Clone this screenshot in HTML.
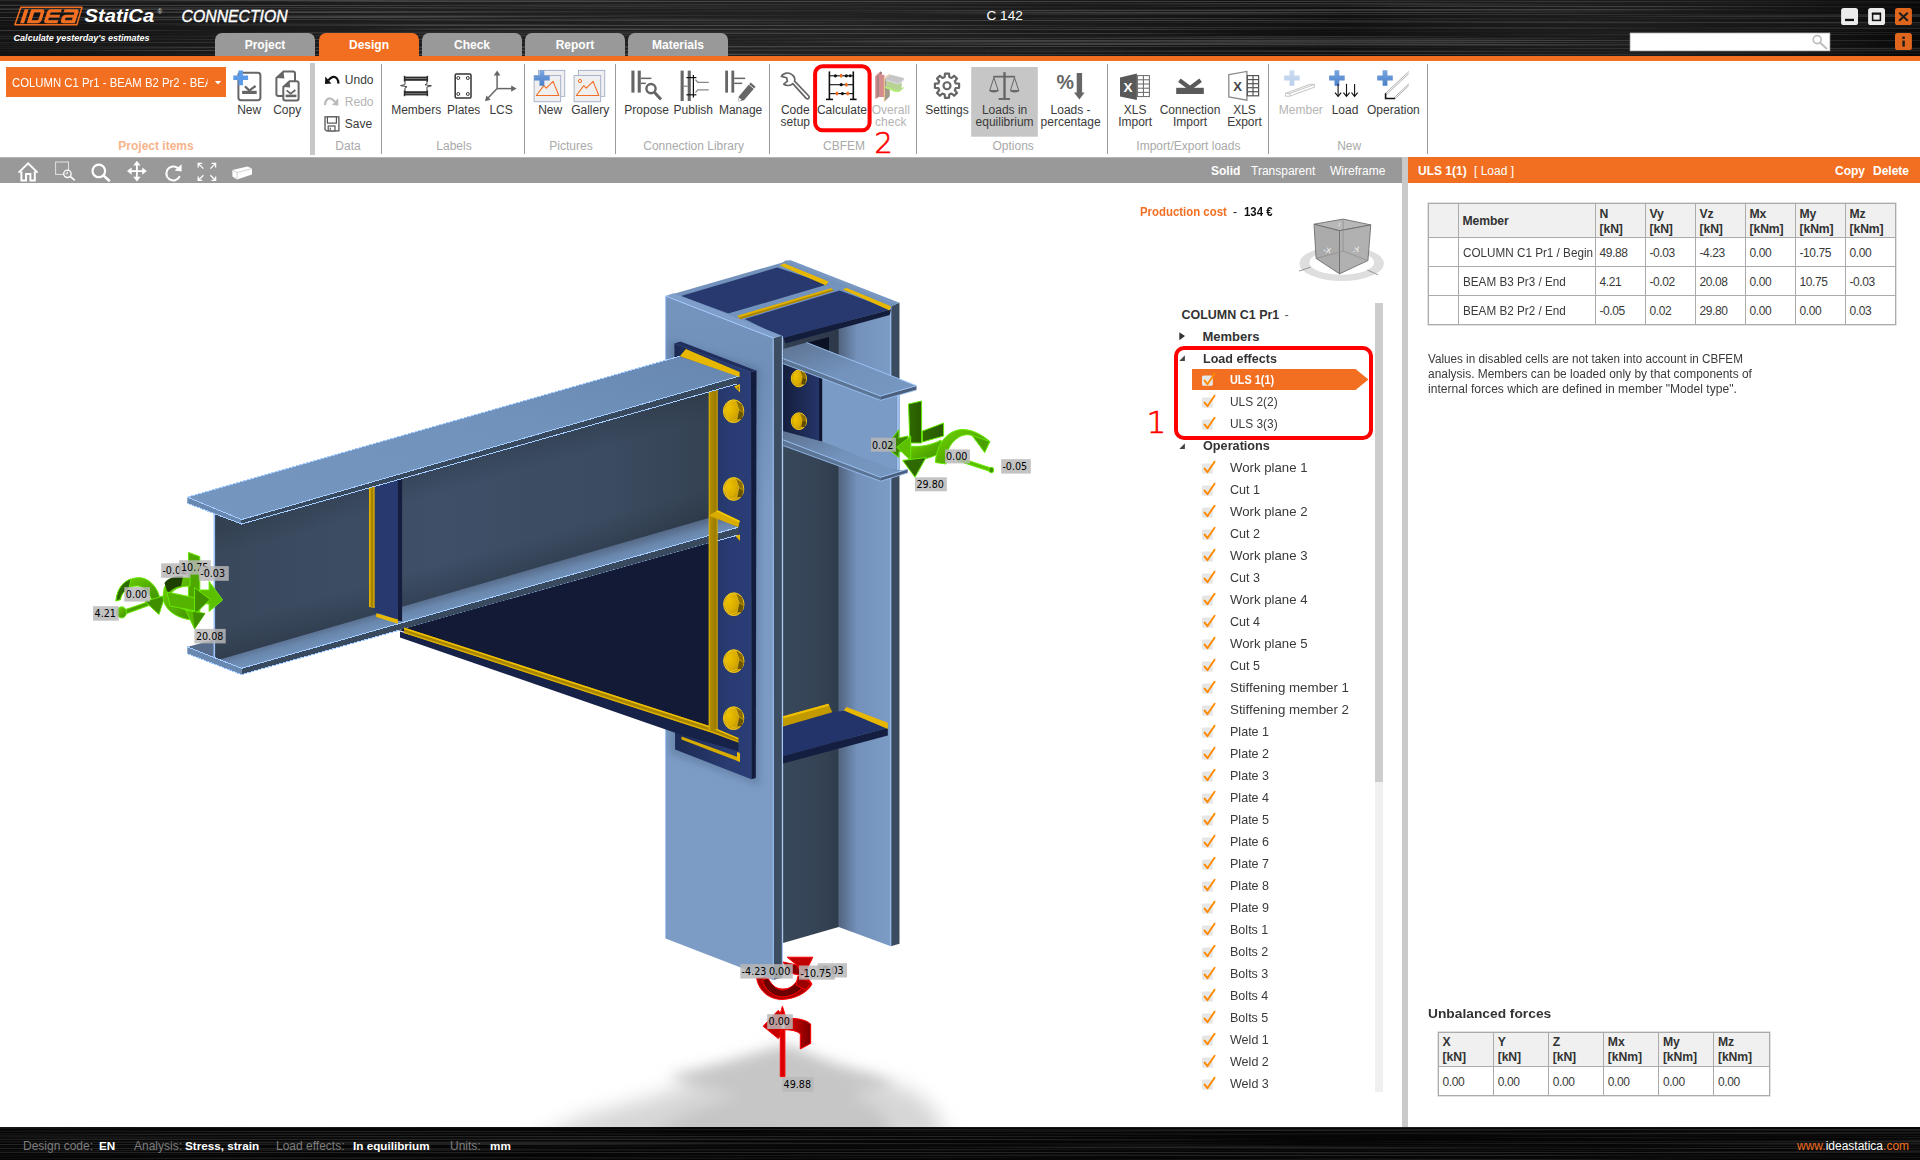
<!DOCTYPE html>
<html lang="en">
<head>
<meta charset="utf-8">
<title>IDEA StatiCa Connection - C 142</title>
<style>
*{box-sizing:border-box;margin:0;padding:0}
html,body{width:1920px;height:1160px;overflow:hidden;background:#fff}
body{font-family:"Liberation Sans",sans-serif;font-size:12px;color:#333;position:relative}
.abs{position:absolute}
#app{position:absolute;left:0;top:0;width:1920px;height:1160px;overflow:hidden;background:#fff}
/* ---------- brushed dark bars ---------- */
.brushed{position:absolute;left:0;width:1920px;background:#1b1b1b;overflow:hidden}
.brushed svg{position:absolute;left:0;top:0}
#titlebar{top:0;height:56px}
#status{top:1127px;height:33px}
#orangeline{position:absolute;left:0;top:56px;width:1920px;height:5px;background:#f26f21}
/* ---------- tabs ---------- */
.tab{position:absolute;top:33px;height:23px;width:100px;background:#999;border-radius:7px 7px 0 0;color:#fff;font-weight:bold;font-size:12px;text-align:center;line-height:24px}
.tab.on{background:#f26f21}
/* ---------- ribbon ---------- */
#ribbon{position:absolute;left:0;top:61px;width:1920px;height:96px;background:#fff}
.rl{position:absolute;margin-top:.7px;font-size:12px;line-height:13px;color:#3a3a3a;text-align:center;white-space:nowrap;transform:translateX(-50%)}
.rl.dis{color:#b4b4b4}
.gl{position:absolute;top:78px;font-size:12px;line-height:14px;color:#a9a9a9;white-space:nowrap;transform:translateX(-50%)}
.sep{position:absolute;top:3px;width:1px;height:90px;background:#9a9a9a}
.ic{position:absolute}
/* ---------- viewport toolbar ---------- */
#vtb{position:absolute;left:0;top:157px;width:1402px;height:26px;background:#999;border-top:1px solid #b5b5b5}
#vtb .m{position:absolute;top:6px;color:#fff;font-size:12px;line-height:14px;white-space:nowrap}
#splitter{position:absolute;left:1402px;top:157px;width:6px;height:970px;background:#c9c9c9}
#phead{position:absolute;left:1408px;top:157px;width:512px;height:26px;background:#f26f21;color:#fff;font-size:12px;line-height:14px}
#phead span{position:absolute;top:7px;white-space:nowrap}
/* ---------- tree ---------- */
.tr{position:absolute;font-size:13px;line-height:16px;color:#333;white-space:nowrap}
.tr.b{font-weight:bold;color:#333}
/* ---------- tables ---------- */
table.g{position:absolute;border-collapse:collapse;font-size:12px;color:#3a3a3a;table-layout:fixed;border:1px solid #a6a6a6;box-shadow:0 0 0 .6px #cfcfcf}
table.g td,table.g th{border:1px solid #ababab;padding:0 0 0 4px;text-align:left;vertical-align:middle;white-space:nowrap;overflow:hidden;background:#fff;font-weight:normal}
table.g th{background:#f0f0f0;font-weight:bold;line-height:15px;color:#333;font-size:12.2px;letter-spacing:-.1px}
table.g td{letter-spacing:-.4px;padding-top:1.5px}
table.g th{padding-top:2px}
table.g td.h{background:#f0f0f0}
table.g .sq{display:inline-block;transform:scaleX(.975);transform-origin:0 50%;letter-spacing:0}
/* ---------- status ---------- */
#status span{position:absolute;top:12px;font-size:12px;line-height:14px;white-space:nowrap}
#status .k{color:#7d7d7d}
#status .v{color:#fff;font-weight:bold;font-size:11.7px}
</style>
</head>
<body>
<div id="app">

<!-- ================= TITLE BAR ================= -->
<div id="titlebar" class="brushed">
<svg width="1920" height="56"><defs>
<filter id="br" x="0" y="0" width="100%" height="100%" color-interpolation-filters="sRGB"><feTurbulence type="fractalNoise" baseFrequency="0.0012 0.75" numOctaves="3" seed="11"/><feColorMatrix type="matrix" values="0 0 0 0 .21  0 0 0 0 .21  0 0 0 0 .21  4.2 0 0 0 -2.0"/></filter>
<filter id="br2" x="0" y="0" width="100%" height="100%" color-interpolation-filters="sRGB"><feTurbulence type="fractalNoise" baseFrequency="0.0012 0.75" numOctaves="3" seed="5"/><feColorMatrix type="matrix" values="0 0 0 0 .14  0 0 0 0 .14  0 0 0 0 .14  4.2 0 0 0 -1.9"/></filter>
<linearGradient id="brg" x1="0" x2="1" y1="0" y2="0"><stop offset="0" stop-color="#fff" stop-opacity=".03"/><stop offset=".2" stop-color="#fff" stop-opacity=".08"/><stop offset=".45" stop-color="#fff" stop-opacity=".09"/><stop offset=".7" stop-color="#fff" stop-opacity=".02"/><stop offset="1" stop-color="#000" stop-opacity=".25"/></linearGradient>
</defs>
<rect width="1920" height="56" fill="#0b0b0b"/>
<rect width="1920" height="56" fill="#4c4c4c" filter="url(#br)"/>
<rect width="1920" height="56" fill="url(#brg)"/>
</svg>
</div>
<div id="orangeline"></div>
<!-- title bar content (page coords) -->
<svg class="abs" style="left:0;top:0" width="1920" height="56" viewBox="0 0 1920 56">
<!-- IDEA logo box -->
<polygon points="14.9,24.8 20.9,7.2 82,7.2 76.9,24.8" fill="none" stroke="#f26f21" stroke-width="1.5" stroke-linejoin="round"/>
<g fill="#f26f21" transform="skewX(-18) translate(27.6,16.2) scale(1.11,1.06) translate(-27.4,-16.2)">
<!-- I -->
<rect x="27.4" y="9.6" width="3.6" height="13.2"/>
<!-- D -->
<path d="M33.4,9.6 h9.4 q3.2,0 3.2,3.2 v6.8 q0,3.2 -3.2,3.2 h-9.4 z M37,12.4 v7.6 h5 q.9,0 .9,-.9 v-5.8 q0,-.9 -.9,-.9 z" fill-rule="evenodd"/>
<!-- E -->
<path d="M48.4,12.6 q0,-3 3,-3 h9.6 v2.8 h-8.4 q-.8,0 -.8,.8 v1.6 h9.2 v2.6 h-9.2 v1.8 q0,.8 .8,.8 h8.4 v2.8 h-9.6 q-3,0 -3,-3 z"/>
<!-- A (lowercase style a) -->
<path d="M63.4,9.6 h10.4 q3,0 3,3 v10.2 h-10.4 q-3,0 -3,-3 v-2 q0,-3 3,-3 h6.8 v-1.6 q0,-.8 -.8,-.8 h-9 z M67.6,17.4 q-.8,0 -.8,.8 v1 q0,.8 .8,.8 h5.6 v-2.6 z" fill-rule="evenodd"/>
</g>
<text x="84.6" y="22.2" font-family="'Liberation Sans',sans-serif" font-weight="bold" font-style="italic" font-size="18.2" fill="#fff" textLength="69.6" lengthAdjust="spacingAndGlyphs">StatiCa</text>
<text x="157.4" y="14.4" font-family="'Liberation Sans',sans-serif" font-size="6.5" fill="#ddd">®</text>
<text x="181.6" y="21.7" font-family="'Liberation Sans',sans-serif" font-style="italic" font-size="15.6" fill="#fff" textLength="106" lengthAdjust="spacingAndGlyphs" stroke="#fff" stroke-width=".35">CONNECTION</text>
<text x="13.6" y="41.2" font-family="'Liberation Sans',sans-serif" font-style="italic" font-weight="bold" font-size="9.6" fill="#fff" textLength="136" lengthAdjust="spacingAndGlyphs">Calculate yesterday's estimates</text>
<!-- window buttons -->
<rect x="1841.1" y="8.1" width="16.9" height="16.9" rx="2.6" fill="#ececec"/>
<rect x="1845" y="18.8" width="9" height="2.3" fill="#111"/>
<rect x="1868.1" y="8.1" width="16.9" height="16.9" rx="2.6" fill="#ececec"/>
<rect x="1872.6" y="13.6" width="7.8" height="6.8" fill="none" stroke="#111" stroke-width="1.5"/>
<rect x="1871.9" y="12.6" width="9.2" height="2" fill="#111"/>
<rect x="1895" y="8.1" width="16.9" height="16.9" rx="2.6" fill="#e0651d"/>
<path d="M1899.2,12.8 L1907.8,20.8 M1907.8,12.8 L1899.2,20.8" stroke="#1c1c1c" stroke-width="2"/>
<rect x="1895" y="33.1" width="16.9" height="16.9" rx="2.6" fill="#e0651d"/>
<rect x="1902.4" y="36.6" width="2.4" height="2.4" fill="#1c1c1c"/>
<rect x="1902.4" y="40.6" width="2.4" height="6" fill="#1c1c1c"/>
<!-- search -->
<rect x="1630.2" y="33.1" width="199.6" height="17.7" fill="#fff" stroke="#d8d8d8" stroke-width=".8"/>
<circle cx="1817.2" cy="39.6" r="4" fill="none" stroke="#bdbdbd" stroke-width="1.7"/>
<line x1="1820.2" y1="42.8" x2="1827" y2="49" stroke="#bdbdbd" stroke-width="2"/>
</svg>


<div class="tab" style="left:215px">Project</div>
<div class="tab on" style="left:319px">Design</div>
<div class="tab" style="left:422px">Check</div>
<div class="tab" style="left:525px">Report</div>
<div class="tab" style="left:628px">Materials</div>

<div class="abs" style="left:986.5px;top:8.4px;color:#fff;font-size:13.6px;line-height:16px;white-space:nowrap">C 142</div>

<!-- ================= RIBBON ================= -->
<div id="ribbon">
<!-- ribbon origin (0,61) -->
<div class="abs" style="left:6px;top:6px;width:220px;height:30px;background:#f26f21"></div>
<div class="abs" style="left:12px;top:14.1px;font-size:13.4px;line-height:16px;color:#fff;white-space:nowrap;transform:scaleX(.847);transform-origin:0 50%;width:230.6px;overflow:hidden">COLUMN C1 Pr1 - BEAM B2 Pr2 - BEAM</div>
<svg class="abs" style="left:0;top:0" width="1920" height="96" viewBox="0 61 1920 96">
<defs>
<linearGradient id="plusB" x1="0" y1="0" x2="0" y2="1"><stop offset="0" stop-color="#7aa7e0"/><stop offset="1" stop-color="#4a7fc8"/></linearGradient>
<g id="plus"><path d="M-2.4,-7.8 h4.8 v5.4 h5.4 v4.8 h-5.4 v5.4 h-4.8 v-5.4 h-5.4 v-4.8 h5.4 z" fill="url(#plusB)"/></g>
<g id="pic"><rect x="4.4" y="-5.1" width="26.2" height="26" fill="#efefef" stroke="#aab4cc" stroke-width="1"/><rect x="0" y="0" width="26.5" height="26.2" fill="#efefef" stroke="#aab4cc" stroke-width="1"/><polygon points="2.2,20 9.7,10.2 12.2,12.7 19,5.9 24.7,20" fill="none" stroke="#f26f21" stroke-width="1.1" stroke-linejoin="round"/></g>
</defs>
<!-- dropdown arrow -->
<polygon points="214.8,81 221.2,81 218,84.6" fill="#fff"/>
<!-- New (project item) -->
<rect x="238.4" y="72.8" width="22" height="27.4" rx="2.6" fill="#fff" stroke="#666" stroke-width="2"/>
<polyline points="245,86.4 249.3,90.6 255.6,86" fill="none" stroke="#666" stroke-width="2.2"/>
<rect x="242.1" y="90.8" width="14.6" height="3.2" fill="#666"/>
<path d="M238.4,70.4 h4.6 v5.1 h5.1 v4.6 h-5.1 v5.1 h-4.6 v-5.1 h-5.1 v-4.6 h5.1 z" fill="#5b9be8"/>
<!-- Copy -->
<path d="M276.4,78 L283.5,71.6 H293 a2,2 0 0 1 2,2 V94 a2,2 0 0 1 -2,2 H278.4 a2,2 0 0 1 -2,-2 Z" fill="#fff" stroke="#666" stroke-width="2"/>
<polygon points="276.4,78 283.5,71.6 284.4,78.6" fill="#666"/>
<path d="M283.3,87 L289.6,81.2 H296.6 a2,2 0 0 1 2,2 V98.4 a2,2 0 0 1 -2,2 H285.3 a2,2 0 0 1 -2,-2 Z" fill="#fff" stroke="#666" stroke-width="2"/>
<polygon points="283.3,87 289.6,81.2 290.2,87.4" fill="#666"/>
<polyline points="286.6,90.4 290.6,93.6 295.4,90" fill="none" stroke="#666" stroke-width="1.8"/>
<rect x="285.6" y="94.6" width="10.8" height="2.6" fill="#666"/>
<!-- thick separator -->
<rect x="310" y="63" width="5" height="92" fill="#c8c8c8"/>
<!-- Undo -->
<path d="M328.4,80.2 Q333.2,74.4 337,78.6 Q338.6,80.6 338.3,83.6" fill="none" stroke="#111" stroke-width="2.2"/>
<polygon points="325.3,76.6 325,83.9 331.4,83.4" fill="#111"/>
<!-- Redo -->
<path d="M335,101.8 Q330.2,96 326.4,100.2 Q324.8,102.2 325.1,105.2" fill="none" stroke="#b9b9b9" stroke-width="2.2"/>
<polygon points="338.1,98.2 338.4,105.5 332,105" fill="#b9b9b9"/>
<!-- Save -->
<path d="M325,116.9 H338.9 V130.9 H326.6 L325,129.4 Z" fill="#fff" stroke="#555" stroke-width="1.3"/>
<rect x="327.4" y="116.9" width="9" height="6.2" fill="#fff" stroke="#555" stroke-width="1.2"/>
<rect x="328.2" y="126" width="6.8" height="4.9" fill="#fff" stroke="#555" stroke-width="1.2"/>
<rect x="329.6" y="127.6" width="1.4" height="2.6" fill="#777"/>
<!-- Members -->
<g fill="#2c2c2c"><rect x="404.4" y="76.6" width="23.1" height="4.2"/><rect x="404.4" y="91.2" width="23.1" height="4.2"/><rect x="403.8" y="75.8" width="1.4" height="5.8"/><rect x="426.7" y="75.8" width="1.4" height="5.8"/><rect x="403.8" y="90.4" width="1.4" height="5.8"/><rect x="426.7" y="90.4" width="1.4" height="5.8"/></g>
<g fill="#9a9a9a"><rect x="405.4" y="78" width="21.2" height=".7"/><rect x="405.4" y="93.4" width="21.2" height=".7"/></g>
<polyline points="405,80.8 405,84.6 400.6,85.6 407,86.8 405,88 405,91.3" fill="none" stroke="#333" stroke-width=".9"/>
<polyline points="427,80.8 427,83.6 425,84.8 431.4,85.8 427,87 427,91.3" fill="none" stroke="#333" stroke-width=".9"/>
<!-- Plates -->
<rect x="455.2" y="74" width="15.8" height="24" rx="1.2" fill="#fff" stroke="#333" stroke-width="1.5"/>
<g fill="#fff" stroke="#333" stroke-width="1"><circle cx="458.3" cy="78" r="1.5"/><circle cx="467.8" cy="78" r="1.5"/><circle cx="458.3" cy="94" r="1.5"/><circle cx="467.8" cy="94" r="1.5"/></g>
<!-- LCS -->
<g stroke="#666" stroke-width="1.5" fill="none"><line x1="497.1" y1="88.6" x2="497.1" y2="74"/><line x1="497.1" y1="88.6" x2="512" y2="88.6"/><line x1="497.1" y1="88.6" x2="487.6" y2="98.4"/></g>
<g fill="#666"><polygon points="497.1,70.4 493.8,75.6 500.4,75.6"/><polygon points="516.6,88.6 511.2,85.4 511.2,91.8"/><polygon points="485,101.2 490.6,99.8 486.4,95.6"/></g>
<!-- Pictures New / Gallery -->
<use href="#pic" x="534.1" y="75.5"/>
<use href="#plus" x="541.9" y="78"/>
<use href="#pic" x="574.1" y="75.5"/>
<circle cx="580" cy="81" r="1.6" fill="none" stroke="#f26f21" stroke-width="1"/>
<!-- Propose -->
<g fill="#666"><rect x="631.4" y="70.6" width="3.1" height="22"/><rect x="637.7" y="70.6" width="3.1" height="22"/><rect x="640.8" y="77.6" width="10.6" height="1.5"/><rect x="640.8" y="82.6" width="5" height="1.5"/></g>
<circle cx="651" cy="88.6" r="4.6" fill="#fff" stroke="#666" stroke-width="2.4"/>
<line x1="654.6" y1="92.4" x2="661" y2="99.6" stroke="#666" stroke-width="3"/>
<!-- Publish -->
<g fill="#666"><rect x="680.6" y="70.6" width="3.1" height="30.4"/><rect x="687.7" y="70.6" width="3.1" height="30.4"/></g>
<g stroke="#111" stroke-width="1.2"><line x1="686.4" y1="77.6" x2="696.4" y2="77.6"/><line x1="686.4" y1="94.8" x2="696.4" y2="94.8"/><line x1="693.4" y1="75" x2="693.4" y2="97.4"/></g>
<g stroke="#888" stroke-width="1.3" fill="none"><path d="M695.4,79.6 L697.8,82.3 H708.8"/><path d="M695.4,92.6 L697.8,89.9 H708.8"/><line x1="683.7" y1="86.2" x2="687.7" y2="86.2"/></g>
<!-- Manage -->
<g fill="#666"><rect x="725.2" y="70.6" width="2.8" height="22"/><rect x="731.4" y="70.6" width="2.8" height="22"/><rect x="734.2" y="77.6" width="11" height="1.5"/><rect x="734.2" y="82.6" width="8" height="1.5"/></g>
<polygon points="739,96.2 750.6,82.6 755.6,86.8 744,100.2 738,101.4" fill="#666"/>
<line x1="749" y1="84.4" x2="754" y2="88.8" stroke="#fff" stroke-width=".8"/>
<polygon points="738,101.4 739.4,97.8 741.6,100" fill="#fff"/>
<!-- Code setup (wrench) -->
<path d="M792.4,75 C789,71.8 783.4,72.6 781.4,76.4 L786.6,77.8 L787.4,81.2 L783.8,84.2 C786.6,86.2 790.6,85.8 792.8,83.6 L806.2,98.4 C807.6,99.8 810.2,97.6 808.8,96 L794.6,81.2 C795.2,79 794.4,76.6 792.4,75 Z" fill="#fff" stroke="#666" stroke-width="1.7" stroke-linejoin="round"/>
<!-- Calculate (abacus) -->
<g stroke="#111" stroke-width="1.6"><line x1="829.4" y1="71.4" x2="829.4" y2="99.4"/><line x1="853.3" y1="71.4" x2="853.3" y2="99.4"/><line x1="826" y1="99.4" x2="833" y2="99.4"/><line x1="850" y1="99.4" x2="856.6" y2="99.4"/></g>
<g stroke="#111" stroke-width="1.1"><line x1="829.4" y1="75.8" x2="853.3" y2="75.8"/><line x1="829.4" y1="84.7" x2="853.3" y2="84.7"/><line x1="829.4" y1="93.6" x2="853.3" y2="93.6"/></g>
<g fill="#111"><circle cx="835.4" cy="75.8" r="1.6"/><circle cx="846.3" cy="75.8" r="1.6"/><circle cx="850.2" cy="75.8" r="1.5"/><circle cx="841.2" cy="84.7" r="1.6"/><circle cx="842.4" cy="93.6" r="1.6"/></g>
<g fill="#f26f21"><ellipse cx="841.1" cy="75.8" rx="1.4" ry="2"/><ellipse cx="846.4" cy="84.7" rx="1.4" ry="2"/><ellipse cx="836.9" cy="93.6" rx="1.4" ry="2"/><ellipse cx="847.8" cy="93.6" rx="1.4" ry="2"/></g>
<rect x="815.1" y="66.3" width="54.5" height="64" rx="7.5" fill="none" stroke="#ff0000" stroke-width="4"/>
<!-- Overall check (faded 3d) -->
<g>
<polygon points="875.2,76.3 880.3,71.5 881.7,72.2 881.7,74.6 884.8,75.3 884.1,77.7 884.1,97 878.6,97 876.2,98.8 875.2,98.4" fill="#d48c8c"/>
<polygon points="876.9,76 879,75.3 879,96.3 876.9,97.7" fill="#a88484"/>
<polygon points="880.3,71.5 881.7,72.2 881.7,74.6 880.3,74" fill="#8a7070"/>
<polygon points="884.7,78.1 886.6,79.8 886.6,87.4 889.8,89.4 889.8,96.3 884.8,101.2" fill="#a29a8a"/>
<polygon points="885.2,86.7 887.2,86 898.6,90.1 903.8,87 904,88.1 899.3,91.9 895.2,91.9 892.1,90.8 885.2,88.1" fill="#b4ee78"/>
<polygon points="886.9,80.1 898.6,83.6 901.7,81.5 901.7,89.4 898.6,90.8 886.9,86.7" fill="#b8d294"/>
<polygon points="885.5,78.1 890,74.6 903.8,78.1 903.8,79.8 898.6,83.6 885.5,79.8" fill="#c6c6c6"/>
<polygon points="885.5,79.8 898.6,83.6 903.8,79.8 903.8,80.6 898.6,84.4 885.5,80.6" fill="#dcd6ee"/>
<polyline points="889.7,74.3 884.1,78.1 884.3,101.9" fill="none" stroke="#f0b464" stroke-width=".8"/>
</g>
<!-- Settings gear -->
<polygon points="944.7,77.0 945.0,73.6 949.0,73.6 949.3,77.0 951.6,78.0 954.1,75.7 957.0,78.6 954.8,81.2 955.7,83.5 959.1,83.7 959.1,87.8 955.7,88.0 954.8,90.3 957.0,92.9 954.1,95.8 951.6,93.5 949.3,94.5 949.0,97.9 945.0,97.9 944.7,94.5 942.4,93.5 939.9,95.8 937.0,92.9 939.2,90.3 938.3,88.0 934.9,87.8 934.9,83.7 938.3,83.5 939.2,81.2 937.0,78.6 939.9,75.7 942.4,78.0" fill="#fff" stroke="#666" stroke-width="2.2" stroke-linejoin="round"/>
<circle cx="947" cy="85.75" r="3.5" fill="#fff" stroke="#666" stroke-width="2.2"/>
<!-- Loads in equilibrium -->
<rect x="971.2" y="67" width="66.6" height="69.7" fill="#c6c6c6"/>
<g fill="#666"><rect x="1003.3" y="72.2" width="2.4" height="26.6"/><rect x="993.1" y="75.8" width="22" height="1.7"/><rect x="998.6" y="98" width="11.4" height="1.9"/></g>
<g fill="none" stroke="#666" stroke-width="1"><polygon points="993.9,77.6 989.7,90.6 998.2,90.6"/><polygon points="1014.5,77.6 1010.4,90.6 1018.8,90.6"/></g>
<path d="M989.3,90.6 h9.2 a4.6,1.8 0 0 1 -9.2,0 z M1010,90.6 h9.2 a4.6,1.8 0 0 1 -9.2,0 z" fill="#666"/>
<!-- Loads - percentage -->
<text x="1056.6" y="88.6" font-family="'Liberation Sans',sans-serif" font-weight="bold" font-size="20.5" fill="#666" textLength="17.5" lengthAdjust="spacingAndGlyphs">%</text>
<rect x="1076.7" y="73" width="5.4" height="20.4" fill="#666"/>
<polygon points="1074,92.5 1084.6,92.5 1079.4,99.4" fill="#666"/>
<!-- XLS Import -->
<polygon points="1120,77.4 1136.9,73.6 1136.9,100 1120,96.6" fill="#595959"/>
<text x="1123.4" y="92" font-family="'Liberation Sans',sans-serif" font-weight="bold" font-size="13.5" fill="#fff">X</text>
<g stroke="#666" stroke-width="1" fill="none"><rect x="1137.4" y="75.6" width="12" height="21"/><line x1="1137.4" y1="79.8" x2="1149.4" y2="79.8"/><line x1="1137.4" y1="84" x2="1149.4" y2="84"/><line x1="1137.4" y1="88.2" x2="1149.4" y2="88.2"/><line x1="1137.4" y1="92.4" x2="1149.4" y2="92.4"/><line x1="1143.4" y1="75.6" x2="1143.4" y2="96.6"/></g>
<!-- Connection Import -->
<polyline points="1179.4,80.2 1190,88.2 1200.6,80.2" fill="none" stroke="#595959" stroke-width="4.2"/>
<rect x="1176.2" y="87.8" width="27.6" height="6.2" fill="#595959"/>
<!-- XLS Export -->
<polygon points="1228.8,74.6 1246.9,71.4 1246.9,100.2 1228.8,97" fill="#fff" stroke="#8a8a8a" stroke-width="1.3"/>
<text x="1233.2" y="91" font-family="'Liberation Sans',sans-serif" font-weight="bold" font-size="13" fill="#444">X</text>
<g stroke="#555" stroke-width="1.2" fill="none"><rect x="1247.4" y="75.6" width="11.2" height="20.2"/><line x1="1247.4" y1="79.6" x2="1258.6" y2="79.6"/><line x1="1247.4" y1="83.7" x2="1258.6" y2="83.7"/><line x1="1247.4" y1="87.7" x2="1258.6" y2="87.7"/><line x1="1247.4" y1="91.7" x2="1258.6" y2="91.7"/><line x1="1253" y1="75.6" x2="1253" y2="95.8"/></g>
<!-- New Member (disabled) -->
<g opacity=".38"><use href="#plus" x="1291.9" y="78"/></g>
<g fill="#fff" stroke="#c4c4c4" stroke-width="1"><polygon points="1285.4,96.2 1289.8,96.2 1314.4,87.2 1314.4,84.4 1310.2,84.2 1285.4,93.4"/><polyline points="1289.8,96.2 1289.8,93.4 1285.4,93.4"/><polyline points="1289.8,93.4 1314.4,84.4"/></g>
<!-- New Load -->
<use href="#plus" x="1336.9" y="78"/>
<g stroke="#111" stroke-width="1.1" fill="none"><line x1="1338.1" y1="83.9" x2="1338.1" y2="96.2"/><polyline points="1335,92.6 1338.1,96.4 1341.2,92.6"/><line x1="1346.5" y1="83.9" x2="1346.5" y2="96.2"/><polyline points="1343.4,92.6 1346.5,96.4 1349.6,92.6"/><line x1="1354.6" y1="83.9" x2="1354.6" y2="96.2"/><polyline points="1351.5,92.6 1354.6,96.4 1357.7,92.6"/></g>
<!-- New Operation -->
<use href="#plus" x="1385" y="78"/>
<g stroke="#9a9a9a" stroke-width=".8" fill="none"><line x1="1385.6" y1="93.2" x2="1408.8" y2="71.6"/><line x1="1386.6" y1="94.4" x2="1408.8" y2="73.6"/><line x1="1395" y1="98.9" x2="1408.8" y2="85.6"/><line x1="1394" y1="97.8" x2="1408.8" y2="83.8"/></g>
<polyline points="1385.6,93.2 1385.6,98.5 1395,98.5" fill="none" stroke="#111" stroke-width="1.6"/>
</svg>
<!-- labels -->
<span class="rl" style="left:249.2px;top:42.4px">New</span>
<span class="rl" style="left:287.2px;top:42.4px">Copy</span>
<span class="rl" style="left:344.8px;top:12.4px;transform:none">Undo</span>
<span class="rl dis" style="left:344.8px;top:34.4px;transform:none">Redo</span>
<span class="rl" style="left:344.8px;top:56.4px;transform:none">Save</span>
<span class="rl" style="left:416.2px;top:42.4px">Members</span>
<span class="rl" style="left:463.7px;top:42.4px">Plates</span>
<span class="rl" style="left:501.1px;top:42.4px">LCS</span>
<span class="rl" style="left:550.2px;top:42.4px">New</span>
<span class="rl" style="left:590.2px;top:42.4px">Gallery</span>
<span class="rl" style="left:646.7px;top:42.4px">Propose</span>
<span class="rl" style="left:693.3px;top:42.4px">Publish</span>
<span class="rl" style="left:740.6px;top:42.4px">Manage</span>
<span class="rl" style="left:795.3px;top:42.4px;line-height:12px">Code<br>setup</span>
<span class="rl" style="left:841.9px;top:42.4px">Calculate</span>
<span class="rl dis" style="left:890.8px;top:42.4px;line-height:12px">Overall<br>check</span>
<span class="rl" style="left:947px;top:42.4px">Settings</span>
<span class="rl" style="left:1004.6px;top:42.4px;line-height:12px">Loads in<br>equilibrium</span>
<span class="rl" style="left:1070.6px;top:42.4px;line-height:12px">Loads -<br>percentage</span>
<span class="rl" style="left:1135.2px;top:42.4px;line-height:12px">XLS<br>Import</span>
<span class="rl" style="left:1190px;top:42.4px;line-height:12px">Connection<br>Import</span>
<span class="rl" style="left:1244.5px;top:42.4px;line-height:12px">XLS<br>Export</span>
<span class="rl dis" style="left:1300.8px;top:42.4px">Member</span>
<span class="rl" style="left:1345px;top:42.4px">Load</span>
<span class="rl" style="left:1393.4px;top:42.4px">Operation</span>
<!-- group labels -->
<span class="gl" style="left:156px;color:#f7b48c;font-weight:bold">Project items</span>
<span class="gl" style="left:348px">Data</span>
<span class="gl" style="left:454px">Labels</span>
<span class="gl" style="left:571px">Pictures</span>
<span class="gl" style="left:693.6px">Connection Library</span>
<span class="gl" style="left:844.1px">CBFEM</span>
<span class="gl" style="left:1013.2px">Options</span>
<span class="gl" style="left:1188.4px">Import/Export loads</span>
<span class="gl" style="left:1349.2px">New</span>
<!-- separators -->
<div class="sep" style="left:381px"></div><div class="sep" style="left:524px"></div><div class="sep" style="left:615px"></div><div class="sep" style="left:769px"></div><div class="sep" style="left:916px"></div><div class="sep" style="left:1107px"></div><div class="sep" style="left:1268px"></div><div class="sep" style="left:1427px"></div>
<!-- red 2 -->
<span class="abs" style="left:874.4px;top:65.6px;font-family:'DejaVu Sans',sans-serif;font-weight:200;font-size:28.6px;line-height:32px;color:#ff0000;-webkit-text-stroke:.7px #ff0000">2</span>

</div>

<!-- ================= VIEW TOOLBAR ================= -->
<div id="vtb">
<svg class="abs" style="left:0;top:0" width="300" height="26" viewBox="0 158 300 26">
<g fill="none" stroke="#fff" stroke-width="2" stroke-linejoin="miter">
<!-- home -->
<polyline points="18.6,172.6 28.1,163.4 37.6,172.6" stroke-width="2"/>
<path d="M21.4,171.4 V180.6 H26 V174 H30.4 V180.6 H34.8 V171.4" stroke-width="2"/>
<!-- zoom window -->
<rect x="55.6" y="162" width="12.9" height="12.4" stroke="#e2e2e2" stroke-width="1"/>
<circle cx="67.4" cy="173.8" r="3.7" fill="#999" stroke-width="1.3"/>
<path d="M67.4,171.6 V173.8 H65.4" stroke-width=".9"/>
<line x1="70.2" y1="176.4" x2="74.8" y2="180.4" stroke-width="1.6"/>
<!-- magnifier -->
<circle cx="98.8" cy="170.9" r="6.3" stroke-width="2.2"/>
<line x1="103.4" y1="175.4" x2="109.8" y2="181.2" stroke-width="2.6"/>
<!-- pan -->
<line x1="136.9" y1="163.6" x2="136.9" y2="178.8" stroke-width="1.8"/>
<line x1="129.6" y1="171.1" x2="144.2" y2="171.1" stroke-width="1.8"/>
<!-- rotate -->
<path d="M179.4,170 A7,7 0 1 0 179.8,176.2" stroke-width="2.1"/>
</g>
<g fill="#fff">
<polygon points="136.9,160.8 133.2,165.4 140.6,165.4"/><polygon points="136.9,181.4 133.2,176.8 140.6,176.8"/><polygon points="127,171.1 131.6,167.4 131.6,174.8"/><polygon points="146.8,171.1 142.2,167.4 142.2,174.8"/>
<polygon points="181.6,164.2 181.6,171.4 174.6,170.6"/>
</g>
<!-- fit -->
<g fill="none" stroke="#fff" stroke-width="1.3">
<path d="M203.4,168.6 L198.4,163.6 M198.2,167.4 V163.4 H202.2"/>
<path d="M210.4,168.6 L215.4,163.6 M215.6,167.4 V163.4 H211.6"/>
<path d="M203.4,175.2 L198.4,180.2 M198.2,176.4 V180.4 H202.2"/>
<path d="M210.4,175.2 L215.4,180.2 M215.6,176.4 V180.4 H211.6"/>
</g>
<!-- box -->
<polygon points="232.4,170 247.6,166.4 252,168.6 252,174.4 237,179.4 232.4,176.4" fill="#fff"/>
<polyline points="232.4,170 237,172.6 252,168.6" fill="none" stroke="#bbb" stroke-width=".7"/>
<line x1="237" y1="172.6" x2="237" y2="179.4" stroke="#bbb" stroke-width=".7"/>
</svg>

<span class="m" style="left:1211px;font-weight:bold">Solid</span>
<span class="m" style="left:1251px">Transparent</span>
<span class="m" style="left:1330px">Wireframe</span>
</div>

<!-- ================= VIEWPORT ================= -->
<div id="view" class="abs" style="left:0;top:183px;width:1402px;height:944px;overflow:hidden;background:#fff">
<svg class="abs" style="left:0;top:0" width="1402" height="944" viewBox="0 183 1402 944" shape-rendering="geometricPrecision">
<defs>
<filter id="blur3" x="-10%" y="-10%" width="120%" height="120%"><feGaussianBlur stdDeviation="3"/></filter>
<filter id="blurS" x="-20%" y="-40%" width="140%" height="180%"><feGaussianBlur stdDeviation="10"/></filter>
<filter id="blurS2" x="-20%" y="-40%" width="140%" height="180%"><feGaussianBlur stdDeviation="7"/></filter>
<filter id="blur22" x="-30%" y="-80%" width="160%" height="260%"><feGaussianBlur stdDeviation="26 12"/></filter>
<linearGradient id="gLight" x1="0" y1="0" x2="1" y2="0"><stop offset="0" stop-color="#7a9ac4"/><stop offset="1" stop-color="#7c9dc8"/></linearGradient>
<linearGradient id="gColFl" x1="0" y1="0" x2="0" y2="1"><stop offset="0" stop-color="#7595bf"/><stop offset=".12" stop-color="#6f8fb8"/><stop offset=".3" stop-color="#7b9bc5"/><stop offset="1" stop-color="#7c9cc6"/></linearGradient>
<linearGradient id="gWeb" x1="0" y1="0" x2="1" y2="0"><stop offset="0" stop-color="#39485b"/><stop offset=".45" stop-color="#3e4f67"/><stop offset=".8" stop-color="#3b4b60"/><stop offset="1" stop-color="#344253"/></linearGradient>
<linearGradient id="gWebV" x1="0" y1="0" x2="0" y2="1"><stop offset="0" stop-color="#3c4c62"/><stop offset=".75" stop-color="#39495d"/><stop offset="1" stop-color="#4a5d78"/></linearGradient>
<linearGradient id="gColWeb" x1="0" y1="0" x2="1" y2="0"><stop offset="0" stop-color="#38485b"/><stop offset=".7" stop-color="#344254"/><stop offset="1" stop-color="#2f3c4c"/></linearGradient>
<linearGradient id="gRFl" x1="0" y1="0" x2="1" y2="0"><stop offset="0" stop-color="#52637f"/><stop offset=".35" stop-color="#7391ba"/><stop offset="1" stop-color="#7c9cc6"/></linearGradient>
<linearGradient id="gNavy" x1="0" y1="0" x2="1" y2="0"><stop offset="0" stop-color="#1c2a52"/><stop offset=".7" stop-color="#283b72"/><stop offset="1" stop-color="#2a3d76"/></linearGradient>
<linearGradient id="gNavyFin" x1="0" y1="0" x2="1" y2="0"><stop offset="0" stop-color="#141d3c"/><stop offset="1" stop-color="#24356a"/></linearGradient>
<linearGradient id="gTopFl" x1="0" y1="1" x2="1" y2="0"><stop offset="0" stop-color="#7496bf"/><stop offset=".6" stop-color="#7092bb"/><stop offset="1" stop-color="#6787b0"/></linearGradient>
<linearGradient id="gB2top" x1="0" y1="0" x2="1" y2="1"><stop offset="0" stop-color="#5d7291"/><stop offset=".5" stop-color="#7393bc"/><stop offset="1" stop-color="#7798c2"/></linearGradient>
<linearGradient id="gBotFl" gradientUnits="userSpaceOnUse" x1="500" y1="577.9" x2="504.6" y2="594.4"><stop offset="0" stop-color="#576c8a"/><stop offset=".55" stop-color="#6a88ae"/><stop offset="1" stop-color="#7292ba"/></linearGradient>
<linearGradient id="gWebShade" gradientUnits="userSpaceOnUse" x1="500" y1="450" x2="536" y2="578"><stop offset="0" stop-color="#1c2530" stop-opacity=".22"/><stop offset=".2" stop-color="#1c2530" stop-opacity="0"/><stop offset=".7" stop-color="#1c2530" stop-opacity="0"/><stop offset="1" stop-color="#1c2530" stop-opacity=".38"/></linearGradient>
<radialGradient id="gBolt" cx=".3" cy=".35" r=".9"><stop offset="0" stop-color="#f0c200"/><stop offset=".6" stop-color="#d8ab00"/><stop offset="1" stop-color="#a88400"/></radialGradient>
<linearGradient id="gWeldV" x1="0" y1="0" x2="1" y2="0"><stop offset="0" stop-color="#f0c000"/><stop offset=".18" stop-color="#b08c00"/><stop offset=".8" stop-color="#9a7a00"/><stop offset="1" stop-color="#e0b200"/></linearGradient>
<g id="bolt"><ellipse cx="0" cy="0" rx="10.2" ry="11.4" fill="#c79e00" stroke="#f2c81e" stroke-width="1"/><polygon points="-9.4,-.5 -5,-9.2 2,-10.6 5.2,-1.6 3.2,8 -4.4,10.6" fill="url(#gBolt)"/><polygon points="2,-10.6 8.4,-6.6 10,1.5 5.2,-1.6" fill="#8a6c00"/><polygon points="5.2,-1.6 10,1.5 8.2,8 3.2,8" fill="#6b5400"/><polyline points="-9.4,-.5 -5,-9.2 2,-10.6 5.2,-1.6 3.2,8 -4.4,10.6 -9.4,-.5" fill="none" stroke="#f6cf2a" stroke-width=".6"/><polyline points="5.2,-1.6 10,1.5" fill="none" stroke="#e8b800" stroke-width=".6"/></g>
<g id="boltS"><ellipse cx="0" cy="0" rx="7.6" ry="8.4" fill="#c79e00" stroke="#f2c81e" stroke-width="1"/><polygon points="-6.9,-.4 -3.7,-6.8 1.5,-7.8 3.8,-1.2 2.4,5.9 -3.2,7.8" fill="url(#gBolt)"/><polygon points="1.5,-7.8 6.2,-4.9 7.4,1.1 3.8,-1.2" fill="#8a6c00"/><polygon points="3.8,-1.2 7.4,1.1 6,5.9 2.4,5.9" fill="#5e4a00"/></g>
</defs>

<!-- ground shadow -->
<g filter="url(#blurS)"><polygon points="786,1050 850,1074 905,1088 930,1104 950,1140 530,1140 585,1116 650,1098 700,1080 740,1066" fill="#d6d6d6"/></g>
<g filter="url(#blurS2)"><polygon points="786,1046 830,1064 880,1078 896,1086 850,1094 880,1112 900,1140 640,1140 690,1112 740,1096 690,1086 668,1076 720,1064" fill="#c4c4c4" opacity=".9"/></g>

<!-- ===== COLUMN: right (far) flange ===== -->
<polygon points="838.7,284 890.8,306 890.8,946.3 838.7,926.9" fill="url(#gRFl)"/>
<polygon points="890.8,306 899.5,302.8 899.5,943.7 890.8,946.3" fill="#3b4b60"/>
<polygon points="782,263 785.5,260.6 790.8,260.2 899.5,302.8 891.7,306.4" fill="#7898c1"/>
<line x1="890.8" y1="306" x2="890.8" y2="946" stroke="#a0c8fc" stroke-width="1"/>
<line x1="838.7" y1="330" x2="838.7" y2="927" stroke="#5f779a" stroke-width="1"/>
<!-- ===== COLUMN: web ===== -->
<polygon points="783.1,330 838.7,316 838.7,926.9 783.1,943" fill="url(#gColWeb)"/>

<!-- lower stiffener -->
<polygon points="783.1,726.5 831,712.3 846.5,710.5 887.8,727.8 783.1,756.3" fill="#22346a"/>
<polygon points="783.1,756.3 887.8,727.8 887.8,735.6 783.1,763.4" fill="#141e40"/>
<polygon points="783.1,716.2 828.4,703.8 832.3,712.3 783.1,726.5" fill="#c29a00"/>
<polygon points="783.1,716.2 828.4,703.8 829.2,705.8 783.1,718.4" fill="#f0c000"/>
<polygon points="846.5,707.1 887.8,722.7 887.8,729.1 843.9,710.5" fill="#e8b800"/>

<!-- ===== cap plates on column top ===== -->
<polygon points="668,295.5 786,261.5 895,304.5 780,337" fill="#7393bd"/>
<polygon points="681,296 777.3,267.6 828,284.2 728.5,313.6" fill="#27396e"/>
<polygon points="744.8,319 839.6,290.6 891,309.6 783.4,338" fill="#27396e"/>
<polygon points="783.4,338 891,309.6 889.7,315 785.4,343.4" fill="#131c3a"/>
<!-- web top strip -->
<polygon points="723,315 838,284.5 840.5,288.5 732,319.5" fill="#7293bd"/>
<polygon points="780,265.6 784,263.3 828.6,281.6 826,285.6" fill="#e8b800"/>
<polygon points="737.3,315.7 831.4,287.9 833.5,290.8 740,319.2" fill="#e0b000"/>
<polygon points="739,317.6 832.6,289.6 833.5,290.8 740,319.2" fill="#a88400"/>
<polygon points="843,289.5 846.3,287.7 891,306.2 889.7,310.5" fill="#e8b800"/>
<!-- under the near cap plate: shadowed web/flange -->
<polygon points="785.4,343.4 838.7,329 838.7,360 785.4,372" fill="#2b3747" opacity=".55"/>

<!-- ===== BEAM B2 (right) ===== -->
<!-- dark gap behind fin plate top -->
<polygon points="806,343 829,337 829,352 806,352" fill="#0c1226"/>
<!-- bottom flange -->
<polygon points="783.2,431.1 822,441.4 896.7,470.7 907.7,469.2 880.6,477.3 783.2,439.9" fill="url(#gB2top)"/>
<polygon points="783.2,439.9 880.6,477.3 880.6,481.2 783.2,445.6" fill="#5d7594"/>
<polygon points="880.6,477.3 907.7,469.2 907.7,472.9 880.6,481.2" fill="#4b5f7c"/>
<!-- web -->
<polygon points="821.3,372 896.7,394.5 896.7,470.7 821.3,441.4" fill="#7a9bc5"/>
<polygon points="896.7,394.5 899.7,393.6 899.7,470 896.7,470.7" fill="#9cbfee"/>
<!-- fin plate -->
<polygon points="783.2,358 819.1,372 819.1,440.6 783.2,431.1" fill="url(#gNavyFin)"/>
<polygon points="819.1,372 822.2,371.5 822.2,441.6 819.1,440.6" fill="#0e1530"/>
<use href="#boltS" x="798.9" y="378.4"/>
<use href="#boltS" x="798.9" y="421.2"/>
<!-- top flange -->
<polygon points="783.2,349 806.6,342.5 916.5,385.7 880.6,396 783.2,358.6" fill="url(#gB2top)"/>
<polygon points="783.2,358.6 880.6,396 880.6,400.3 783.2,363.7" fill="#5d7594"/>
<polygon points="880.6,396 916.5,385.7 916.5,390 880.6,400.3" fill="#4b5f7c"/>
<polyline points="806.6,342.5 916.5,385.7 880.6,396 783.2,358.6" fill="none" stroke="#a0c8fc" stroke-width=".9"/>
<polyline points="783.2,363.7 880.6,400.3 916.5,390" fill="none" stroke="#a0c8fc" stroke-width=".8"/>
<polyline points="783.2,439.9 880.6,477.3 907.7,469.2" fill="none" stroke="#a0c8fc" stroke-width=".9"/>
<polyline points="783.2,445.6 880.6,481.2 907.7,472.9" fill="none" stroke="#a0c8fc" stroke-width=".8"/>

<!-- ===== COLUMN: left (near) flange ===== -->
<polygon points="665.6,296 773.2,338 773.3,980 665.5,938.5" fill="url(#gColFl)"/>
<polygon points="773.2,338 782.2,335.7 782.3,977.5 773.3,980" fill="#3c4c61"/>
<polygon points="665.6,296 673.7,293.3 782.2,335.7 773.2,338" fill="#7f9fca"/>
<polyline points="665.6,296 773.2,338 773.3,980" fill="none" stroke="#a0c8fc" stroke-width="1"/>
<line x1="782.3" y1="336" x2="782.3" y2="977" stroke="#a0c8fc" stroke-width="1"/>
<line x1="665.6" y1="296" x2="665.5" y2="938.5" stroke="#a0c8fc" stroke-width=".8"/>

<!-- ===== END PLATE ===== -->
<!-- soft shadow of end plate on flange -->
<polygon points="670,340 760,368 760,786 670,754" fill="#4b607f" opacity=".35" filter="url(#blur3)"/>
<polygon points="674.4,343.5 751,372 751.4,779.3 675.1,749.5" fill="url(#gNavy)"/>
<polygon points="751,372 756.5,370.7 755.8,778 751.4,779.3" fill="#131c3c"/>
<polygon points="674.4,343.5 680.4,341.5 756.5,370.7 751,372" fill="#1f2e5c"/>

<!-- ===== BEAM B3 (main, left) ===== -->
<!-- bottom flange top face -->
<polygon points="187.3,646.9 241.5,668.3 738.4,527.2 690,507" fill="url(#gBotFl)"/>
<!-- web -->
<polygon points="214,510 708.7,386 708.7,518.1 214.4,661" fill="url(#gWeb)"/>
<polygon points="214,510 708.7,386 708.7,518.1 214.4,661" fill="url(#gWebShade)"/>
<line x1="214.3" y1="511" x2="214.3" y2="661" stroke="#9cc4fa" stroke-width="1.6"/>
<!-- bottom flange edges -->
<polygon points="187.3,646.9 241.5,668.3 241.5,674.6 187.3,653.7" fill="#6888b0"/>
<polygon points="241.5,668.3 738.4,527.2 738.4,534.9 241.5,674.6" fill="#3a4a5e"/>
<g shape-rendering="crispEdges"><polyline points="187.3,646.9 241.5,668.3 738.4,527.2" fill="none" stroke="#a4ccff" stroke-width="1"/>
<polyline points="187.3,653.7 241.5,674.6 738.4,534.9" fill="none" stroke="#a4ccff" stroke-width="1"/></g>

<!-- stiffener in beam -->
<polygon points="369,487.9 374.8,486.5 374.8,608 369,606.9" fill="#e0b000"/>
<polygon points="370.6,488 373.4,487.3 373.4,607.3 370.6,606.8" fill="#a58200"/>
<polygon points="374.8,484 397.9,478.5 397.9,620.4 374.8,611.5" fill="#27396f"/>
<polygon points="397.9,478.5 402.1,477.5 402.1,621.6 397.9,620.4" fill="#141d3d"/>
<polygon points="376.2,613.2 397.9,619.6 397.9,623.8 376.2,617" fill="#e8b800"/>

<!-- haunch -->
<polygon points="399,630 708.7,543 708.7,731" fill="#121a35"/>
<polygon points="400,631.5 712.6,731.6 738.4,742.4 738.4,751.2 675.1,732.7 400,637.4" fill="#172248"/>
<polygon points="404,627.6 712.6,727 738.4,738 738.4,742.6 712.6,733 404,633" fill="#a88600"/>
<polygon points="404,627.6 712.6,727 738.4,738 738.4,739.4 712.6,728.6 404,629.2" fill="#f0c000"/>
<polygon points="404,631.8 712.6,731.6 738.4,741.4 738.4,742.6 712.6,733 404,633" fill="#e0b200"/>
<polygon points="681.5,736.4 737.6,757 737.6,761 681.5,739.6" fill="#d8ac00"/>
<polygon points="737,752 740,753 740,762 737,761" fill="#e8b800"/>

<!-- vertical weld at end plate -->
<polygon points="708.7,391 717.7,388.5 717.7,729 708.7,731" fill="url(#gWeldV)"/>
<!-- bottom flange weld -->
<polygon points="708.7,515.5 717.7,510.3 739.7,520.7 738.4,527.2" fill="#d8ac00"/>
<polygon points="717.7,510.3 739.7,520.7 739.4,522.4 716,511.3" fill="#f4c800"/>
<polygon points="735.5,536 740,534.6 740,541" fill="#e8b800"/>

<!-- top flange -->
<polygon points="187.3,497.1 241.5,519.6 739,376.2 679.8,356.2" fill="url(#gTopFl)"/>
<polygon points="187.3,497.1 241.5,519.6 241.5,524 187.3,503.3" fill="#6888b0"/>
<polygon points="241.5,519.6 739,376.2 737,384 241.5,524" fill="#39495d"/>
<g shape-rendering="crispEdges"><polyline points="679.8,356.2 187.3,497.1 241.5,519.6 739,376.2" fill="none" stroke="#a4ccff" stroke-width="1"/>
<polyline points="187.3,503.3 241.5,524 737,384" fill="none" stroke="#a4ccff" stroke-width="1"/></g>
<!-- top weld -->
<polygon points="679.8,356.2 685.9,349 739.6,371.9 739.6,377" fill="#e8b800"/>
<polygon points="734,386.5 740,384 740,392.5" fill="#e8b800"/>
<polygon points="736.4,387.6 739,386.4 739,390.4" fill="#9a7a00"/>

<!-- bolts -->
<use href="#bolt" x="733.6" y="411.2"/>
<use href="#bolt" x="733.6" y="489"/>
<use href="#bolt" x="733.8" y="604.2"/>
<use href="#bolt" x="733.8" y="661.1"/>
<use href="#bolt" x="733.6" y="718.2"/>

<defs>
<linearGradient id="gG" x1="0" y1="0" x2="1" y2="1"><stop offset="0" stop-color="#6fd400"/><stop offset="1" stop-color="#3e8e00"/></linearGradient>
<linearGradient id="gGd" x1="0" y1="0" x2="1" y2="0"><stop offset="0" stop-color="#2f6a00"/><stop offset="1" stop-color="#285a00"/></linearGradient>
<linearGradient id="gR" x1="0" y1="0" x2="1" y2="0"><stop offset="0" stop-color="#e80000"/><stop offset="1" stop-color="#7a0000"/></linearGradient>
</defs>
<g stroke-linejoin="round">
<!-- ===== left cluster (beam B3 end) ===== -->
<g stroke="#66e800" stroke-width="1">
<!-- moment arc 0.00 -->
<path d="M116,601 C117,584 131,576 142,578 C152,580 158,590 159.5,597 L152,601 C149,592 144,586.5 138,586 C128,585.5 121,592 120.5,599.5 Z" fill="url(#gG)"/>
<path d="M116,601 C117,588 124,581 131,579 L129,588 C124,591 121,595 120.5,599.5 Z" fill="#2f6a00"/>
<!-- axial rod 4.21 -->
<polygon points="125.5,609.5 149,601.5 150.2,605 126.8,613.6" fill="#4aa000"/>
<ellipse cx="121.7" cy="612.4" rx="4.8" ry="5.6" fill="url(#gG)"/>
<polygon points="145,601.5 165.2,595.3 159,614.5" fill="#3f8f00"/>
<!-- vertical shaft -->
<polygon points="188.4,552.4 199.8,556.6 199.8,612 188.4,611" fill="#4fa800"/>
<!-- ring -->
<path d="M164,589 C166,580 178,576 190,578 L190,586 C181,586 172,589 170,596 C172,606 184,611 196,611 L196,620 C180,620 165,612 163,598 Z" fill="url(#gG)"/>
<path d="M164.5,583 C168,578 176,575.5 183,576.5 L181,586 C175,587 170,590 168,594 Z" fill="#1d3f00" stroke="none"/>
<polygon points="167,592 196,598 196,611 170,606" fill="#55b400"/>
<!-- right arrows -->
<polygon points="209.1,581.4 222.6,600 209.1,611.4 209.1,604 200,603 200,590 209.1,590" fill="#5cc000"/>
<polygon points="194.6,587.6 210.1,599.5 194.6,614.5" fill="#3f8f00"/>
<!-- down arrowhead -->
<polygon points="185.8,610.3 205,613.4 194.6,629" fill="#58b800"/>
<polygon points="193,612 205,613.4 194.6,629" fill="#3f8f00" stroke="none"/>
</g>

<!-- ===== right cluster (beam B2 end) ===== -->
<g stroke="#66e800" stroke-width="1">
<!-- back-left small arrow -->
<polygon points="885.8,447.2 898.9,429.6 898.9,438 908,436 908,450 898.9,452 898.9,457.5" fill="#3c8600"/>
<!-- dark band right -->
<polygon points="922.4,431.1 943.6,423 943.6,436 922.4,442" fill="url(#gGd)"/>
<!-- vertical shaft -->
<polygon points="908.5,404 921.6,401 921.6,443 909.9,443" fill="url(#gGd)"/>
<!-- ring band -->
<path d="M909,446 C920,447.5 932,445 941,440 L942,452 C932,458 920,461 909,460 Z" fill="url(#gG)"/>
<!-- left arrowhead -->
<polygon points="896.7,447.2 910.7,436.2 910.7,460.4" fill="#5cc000"/>
<!-- down arrowhead -->
<polygon points="902.6,460.4 926,457.5 915,477.3" fill="#2f6a00"/>
<!-- moment arc -->
<path d="M935.5,462.5 C936,444 948,430 962,429.5 C972,429.5 981,434 989.8,441.4 L984.7,452.3 L972.2,435.5 C966,433.5 960,435 954,441 C948,447 946,455 946,464 Z" fill="url(#gG)"/>
<polygon points="972.2,435.5 989.8,441.4 984.7,452.3" fill="#4aa000"/>
<!-- rod -->
<polygon points="958,457.2 991.5,468.2 990.5,471.6 957,460.6" fill="#5cc000"/>
<ellipse cx="991.3" cy="470" rx="2.4" ry="2.8" fill="#3f8f00"/>
</g>

<!-- ===== bottom cluster (column base, red) ===== -->
<g stroke="#ff0000" stroke-width="1">
<path d="M756.5,978 C759,992 770,999.5 782,999.5 C796,999 808,992 812,984 L806,975 C800,984 792,989 783,989 C775,989 769,984 766,977 Z" fill="#a80000"/>
<path d="M768,978 C772,986 778,990 783,990 C790,989 796,984 800,976 L805,985 C799,993 790,997 781,997 C772,996 765,989 762,980 Z" fill="#6a0000"/>
<polygon points="787.2,957.2 812.8,957.2 804.5,974.5 798,966" fill="#c00000"/>
<polygon points="783,962 797,965 803,976 790,973" fill="#8a0000"/>
<polygon points="798,976 811,983 806,990 796,985" fill="#9a0000"/>
<!-- moment arc -->
<path d="M785.2,1018.6 C795,1017.5 806,1019.5 810.7,1024.1 L810.7,1043.4 L800.3,1049 L800.3,1033.8 C797,1031 791,1029.7 785.2,1029.7 Z" fill="url(#gR)"/>
<polygon points="763.1,1026.2 778.3,1010.3 781,1014 781,1035 778.3,1038.6" fill="#c40000"/>
<!-- vertical arrow -->
<polygon points="780.3,1029 784.9,1029 784.9,1076.6 780.3,1076.6" fill="#d80000"/>
<polygon points="782.4,1006.2 786,1018 779,1018" fill="#d80000"/>
</g>
</g>

<!-- ===== value labels ===== -->
<g font-family="'DejaVu Sans','Liberation Sans',sans-serif" font-size="9.6" fill="#000">
<rect x="93.1" y="606.2" width="25.6" height="14.5" fill="#b8b8b8" fill-opacity=".84"/>
<text x="94.6" y="617.2">4.21</text>
<rect x="124.3" y="587.1" width="25.7" height="14.5" fill="#b8b8b8" fill-opacity=".84"/>
<text x="125.8" y="598.1">0.00</text>
<rect x="161.2" y="563.3" width="29.3" height="14.5" fill="#b8b8b8" fill-opacity=".84"/>
<text x="162.4" y="574.3">-0.02</text>
<rect x="179.1" y="560.2" width="31.6" height="14.5" fill="#b8b8b8" fill-opacity=".84"/>
<text x="181" y="571.2">10.75</text>
<rect x="198.8" y="566.1" width="30" height="14.7" fill="#b8b8b8" fill-opacity=".84"/>
<text x="200.2" y="577.2">-0.03</text>
<rect x="194.4" y="628.9" width="31.3" height="14.5" fill="#b8b8b8" fill-opacity=".84"/>
<text x="195.9" y="639.9">20.08</text>
<rect x="871" y="437.7" width="25" height="14" fill="#b8b8b8" fill-opacity=".84"/>
<text x="872" y="448.6">0.02</text>
<rect x="945" y="449.4" width="25" height="14" fill="#b8b8b8" fill-opacity=".84"/>
<text x="946" y="460.2">0.00</text>
<rect x="1001.2" y="459.2" width="29.6" height="14.4" fill="#b8b8b8" fill-opacity=".84"/>
<text x="1002.4" y="470.2">-0.05</text>
<rect x="915" y="477.3" width="31.8" height="14" fill="#b8b8b8" fill-opacity=".84"/>
<text x="916.4" y="488.2">29.80</text>
<rect x="740.3" y="964.1" width="52.5" height="14.5" fill="#b8b8b8" fill-opacity=".84"/>
<text x="741.6" y="975.1">-4.23</text>
<text x="768.9" y="975.1">0.00</text>
<rect x="817.6" y="963.2" width="29.4" height="14.3" fill="#b8b8b8" fill-opacity=".84"/>
<text x="818.9" y="974.2">-0.03</text>
<rect x="799" y="965.5" width="35.8" height="14.2" fill="#b8b8b8" fill-opacity=".84"/>
<text x="800.4" y="976.5">-10.75</text>
<rect x="767.2" y="1014.2" width="25.6" height="14.8" fill="#b8b8b8" fill-opacity=".84"/>
<text x="768.6" y="1025.3">0.00</text>
<rect x="782.1" y="1077.2" width="31.6" height="14.5" fill="#b8b8b8" fill-opacity=".84"/>
<text x="783.6" y="1088.2">49.88</text>
</g>

<!-- nav cube -->
<g>
<path d="M1299.4,263.5 a42.3,17.5 0 1,0 84.6,0 a42.3,17.5 0 1,0 -84.6,0 Z M1309.3,262.5 a32.4,12.3 0 1,1 64.8,0 a32.4,12.3 0 1,1 -64.8,0 Z" fill="#dedede" fill-rule="evenodd"/>
<line x1="1299" y1="271" x2="1310.5" y2="267.2" stroke="#8a8a8a" stroke-width=".9"/>
<line x1="1367.5" y1="270" x2="1378" y2="274.8" stroke="#8a8a8a" stroke-width=".9"/>
<g stroke="#6f6f6f" stroke-width=".9" stroke-linejoin="round">
<polygon points="1343.1,219.1 1314,224.2 1339.5,230.7 1370.8,224.9" fill="#b4b4b4" fill-opacity=".95"/>
<polygon points="1314,224.2 1339.5,230.7 1339.5,273.8 1316.1,258.4" fill="#a6a6a6" fill-opacity=".95"/>
<polygon points="1339.5,230.7 1370.8,224.9 1367.9,260.6 1339.5,273.8" fill="#adadad" fill-opacity=".95"/>
<polyline points="1343.1,219.1 1343.1,251.1 1316.1,258.4" fill="none" stroke="#8c8c8c" stroke-width=".7"/>
<polyline points="1343.1,251.1 1367.9,260.6" fill="none" stroke="#8c8c8c" stroke-width=".7"/>
</g>
<text x="1323.6" y="252.6" font-size="7.5" fill="#fff" font-family="'Liberation Sans',sans-serif" transform="rotate(12 1326 250)">-X</text>
<text x="1352.4" y="252.6" font-size="7.5" fill="#fff" font-family="'Liberation Sans',sans-serif" transform="rotate(-14 1356 250)">-Y</text>
<text x="1337" y="226" font-size="4" fill="#eee" font-family="'Liberation Sans',sans-serif">-Z</text>
</g>

</svg>

<div class="abs" style="left:1139.5px;top:22px;font-size:12px;line-height:14px;white-space:nowrap;color:#f26f21;font-weight:bold;transform:scaleX(.95);transform-origin:0 50%">Production cost</div>
<div class="abs" style="left:1233px;top:22px;font-size:12px;line-height:14px;white-space:nowrap;color:#222">-</div>
<div class="abs" style="left:1243.5px;top:22px;font-size:12px;line-height:14px;white-space:nowrap;color:#111;font-weight:bold;transform:scaleX(.95);transform-origin:0 50%">134 €</div>
</div>

<!-- ================= TREE ================= -->
<div id="tree" class="abs" style="left:1130px;top:290px;width:272px;height:837px">
<div class="abs" style="left:245px;top:13px;width:8px;height:789px;background:#f0f0f0"></div>
<div class="abs" style="left:245px;top:13px;width:8px;height:479px;background:#cdcdcd"></div>
<span class="tr" style="left:51.4px;top:17.0px;font-size:12.5px;color:#333;font-weight:bold;">COLUMN C1 Pr1</span>
<span class="tr" style="left:154.5px;top:17.0px;font-size:12.5px;color:#555;">-</span>
<span class="tr" style="left:72.5px;top:38.9px;font-size:13px;color:#333;font-weight:bold;">Members</span>
<span class="tr" style="left:72.5px;top:61.0px;font-size:13px;color:#333;font-weight:bold;display:inline-block;transform:scaleX(0.965);transform-origin:0 50%;">Load effects</span>
<span class="tr" style="left:72.5px;top:148.2px;font-size:13px;color:#333;font-weight:bold;display:inline-block;transform:scaleX(0.975);transform-origin:0 50%;">Operations</span>
<svg class="abs" style="left:46px;top:38px" width="14" height="130" viewBox="1176 328 14 130"><polygon points="1179.3,332.2 1185,336.1 1179.3,340.2" fill="#333"/><polygon points="1179.3,360.9 1184.9,355.2 1184.9,360.9" fill="#444"/><polygon points="1179.3,448.9 1184.9,443.2 1184.9,448.9" fill="#444"/></svg>
<svg class="abs" style="left:62px;top:79px" width="178" height="21" viewBox="0 0 178 21"><polygon points="0,0 163.5,0 176.5,10.5 163.5,21 0,21" fill="#f26f21"/></svg>
<svg class="abs" style="left:71.0px;top:80.5px" width="18" height="18" viewBox="0 0 18 18"><rect x="1" y="4.4" width="10.8" height="10.4" rx="1.6" fill="#e6e6e6"/><path d="M3.6,9.6 L6.4,13.2 L13.6,2.8" fill="none" stroke="#ff8a00" stroke-width="1.9" stroke-linecap="round" stroke-linejoin="round"/></svg>
<span class="tr" style="left:99.7px;top:82.3px;font-size:13px;color:#fff;font-weight:bold;display:inline-block;transform:scaleX(0.835);transform-origin:0 50%;">ULS 1(1)</span>
<svg class="abs" style="left:71.0px;top:102.5px" width="18" height="18" viewBox="0 0 18 18"><rect x="1" y="4.4" width="10.8" height="10.4" rx="1.6" fill="#e6e6e6"/><path d="M3.6,9.6 L6.4,13.2 L13.6,2.8" fill="none" stroke="#ff8a00" stroke-width="1.9" stroke-linecap="round" stroke-linejoin="round"/></svg>
<span class="tr" style="left:99.7px;top:104.3px;font-size:13px;color:#3a3a3a;display:inline-block;transform:scaleX(0.915);transform-origin:0 50%;">ULS 2(2)</span>
<svg class="abs" style="left:71.0px;top:124.5px" width="18" height="18" viewBox="0 0 18 18"><rect x="1" y="4.4" width="10.8" height="10.4" rx="1.6" fill="#e6e6e6"/><path d="M3.6,9.6 L6.4,13.2 L13.6,2.8" fill="none" stroke="#ff8a00" stroke-width="1.9" stroke-linecap="round" stroke-linejoin="round"/></svg>
<span class="tr" style="left:99.7px;top:126.3px;font-size:13px;color:#3a3a3a;display:inline-block;transform:scaleX(0.915);transform-origin:0 50%;">ULS 3(3)</span>
<svg class="abs" style="left:71.0px;top:168.5px" width="18" height="18" viewBox="0 0 18 18"><rect x="1" y="4.4" width="10.8" height="10.4" rx="1.6" fill="#e6e6e6"/><path d="M3.6,9.6 L6.4,13.2 L13.6,2.8" fill="none" stroke="#ff8a00" stroke-width="1.9" stroke-linecap="round" stroke-linejoin="round"/></svg>
<span class="tr" style="left:99.7px;top:170.3px;font-size:13px;color:#3a3a3a;display:inline-block;transform:scaleX(1.015);transform-origin:0 50%;">Work plane 1</span>
<svg class="abs" style="left:71.0px;top:190.5px" width="18" height="18" viewBox="0 0 18 18"><rect x="1" y="4.4" width="10.8" height="10.4" rx="1.6" fill="#e6e6e6"/><path d="M3.6,9.6 L6.4,13.2 L13.6,2.8" fill="none" stroke="#ff8a00" stroke-width="1.9" stroke-linecap="round" stroke-linejoin="round"/></svg>
<span class="tr" style="left:99.7px;top:192.3px;font-size:13px;color:#3a3a3a;display:inline-block;transform:scaleX(0.965);transform-origin:0 50%;">Cut 1</span>
<svg class="abs" style="left:71.0px;top:212.5px" width="18" height="18" viewBox="0 0 18 18"><rect x="1" y="4.4" width="10.8" height="10.4" rx="1.6" fill="#e6e6e6"/><path d="M3.6,9.6 L6.4,13.2 L13.6,2.8" fill="none" stroke="#ff8a00" stroke-width="1.9" stroke-linecap="round" stroke-linejoin="round"/></svg>
<span class="tr" style="left:99.7px;top:214.3px;font-size:13px;color:#3a3a3a;display:inline-block;transform:scaleX(1.015);transform-origin:0 50%;">Work plane 2</span>
<svg class="abs" style="left:71.0px;top:234.5px" width="18" height="18" viewBox="0 0 18 18"><rect x="1" y="4.4" width="10.8" height="10.4" rx="1.6" fill="#e6e6e6"/><path d="M3.6,9.6 L6.4,13.2 L13.6,2.8" fill="none" stroke="#ff8a00" stroke-width="1.9" stroke-linecap="round" stroke-linejoin="round"/></svg>
<span class="tr" style="left:99.7px;top:236.3px;font-size:13px;color:#3a3a3a;display:inline-block;transform:scaleX(0.965);transform-origin:0 50%;">Cut 2</span>
<svg class="abs" style="left:71.0px;top:256.5px" width="18" height="18" viewBox="0 0 18 18"><rect x="1" y="4.4" width="10.8" height="10.4" rx="1.6" fill="#e6e6e6"/><path d="M3.6,9.6 L6.4,13.2 L13.6,2.8" fill="none" stroke="#ff8a00" stroke-width="1.9" stroke-linecap="round" stroke-linejoin="round"/></svg>
<span class="tr" style="left:99.7px;top:258.3px;font-size:13px;color:#3a3a3a;display:inline-block;transform:scaleX(1.015);transform-origin:0 50%;">Work plane 3</span>
<svg class="abs" style="left:71.0px;top:278.5px" width="18" height="18" viewBox="0 0 18 18"><rect x="1" y="4.4" width="10.8" height="10.4" rx="1.6" fill="#e6e6e6"/><path d="M3.6,9.6 L6.4,13.2 L13.6,2.8" fill="none" stroke="#ff8a00" stroke-width="1.9" stroke-linecap="round" stroke-linejoin="round"/></svg>
<span class="tr" style="left:99.7px;top:280.3px;font-size:13px;color:#3a3a3a;display:inline-block;transform:scaleX(0.965);transform-origin:0 50%;">Cut 3</span>
<svg class="abs" style="left:71.0px;top:300.5px" width="18" height="18" viewBox="0 0 18 18"><rect x="1" y="4.4" width="10.8" height="10.4" rx="1.6" fill="#e6e6e6"/><path d="M3.6,9.6 L6.4,13.2 L13.6,2.8" fill="none" stroke="#ff8a00" stroke-width="1.9" stroke-linecap="round" stroke-linejoin="round"/></svg>
<span class="tr" style="left:99.7px;top:302.3px;font-size:13px;color:#3a3a3a;display:inline-block;transform:scaleX(1.015);transform-origin:0 50%;">Work plane 4</span>
<svg class="abs" style="left:71.0px;top:322.5px" width="18" height="18" viewBox="0 0 18 18"><rect x="1" y="4.4" width="10.8" height="10.4" rx="1.6" fill="#e6e6e6"/><path d="M3.6,9.6 L6.4,13.2 L13.6,2.8" fill="none" stroke="#ff8a00" stroke-width="1.9" stroke-linecap="round" stroke-linejoin="round"/></svg>
<span class="tr" style="left:99.7px;top:324.3px;font-size:13px;color:#3a3a3a;display:inline-block;transform:scaleX(0.965);transform-origin:0 50%;">Cut 4</span>
<svg class="abs" style="left:71.0px;top:344.5px" width="18" height="18" viewBox="0 0 18 18"><rect x="1" y="4.4" width="10.8" height="10.4" rx="1.6" fill="#e6e6e6"/><path d="M3.6,9.6 L6.4,13.2 L13.6,2.8" fill="none" stroke="#ff8a00" stroke-width="1.9" stroke-linecap="round" stroke-linejoin="round"/></svg>
<span class="tr" style="left:99.7px;top:346.3px;font-size:13px;color:#3a3a3a;display:inline-block;transform:scaleX(1.015);transform-origin:0 50%;">Work plane 5</span>
<svg class="abs" style="left:71.0px;top:366.5px" width="18" height="18" viewBox="0 0 18 18"><rect x="1" y="4.4" width="10.8" height="10.4" rx="1.6" fill="#e6e6e6"/><path d="M3.6,9.6 L6.4,13.2 L13.6,2.8" fill="none" stroke="#ff8a00" stroke-width="1.9" stroke-linecap="round" stroke-linejoin="round"/></svg>
<span class="tr" style="left:99.7px;top:368.3px;font-size:13px;color:#3a3a3a;display:inline-block;transform:scaleX(0.965);transform-origin:0 50%;">Cut 5</span>
<svg class="abs" style="left:71.0px;top:388.5px" width="18" height="18" viewBox="0 0 18 18"><rect x="1" y="4.4" width="10.8" height="10.4" rx="1.6" fill="#e6e6e6"/><path d="M3.6,9.6 L6.4,13.2 L13.6,2.8" fill="none" stroke="#ff8a00" stroke-width="1.9" stroke-linecap="round" stroke-linejoin="round"/></svg>
<span class="tr" style="left:99.7px;top:390.3px;font-size:13px;color:#3a3a3a;display:inline-block;transform:scaleX(1.025);transform-origin:0 50%;">Stiffening member 1</span>
<svg class="abs" style="left:71.0px;top:410.5px" width="18" height="18" viewBox="0 0 18 18"><rect x="1" y="4.4" width="10.8" height="10.4" rx="1.6" fill="#e6e6e6"/><path d="M3.6,9.6 L6.4,13.2 L13.6,2.8" fill="none" stroke="#ff8a00" stroke-width="1.9" stroke-linecap="round" stroke-linejoin="round"/></svg>
<span class="tr" style="left:99.7px;top:412.3px;font-size:13px;color:#3a3a3a;display:inline-block;transform:scaleX(1.025);transform-origin:0 50%;">Stiffening member 2</span>
<svg class="abs" style="left:71.0px;top:432.5px" width="18" height="18" viewBox="0 0 18 18"><rect x="1" y="4.4" width="10.8" height="10.4" rx="1.6" fill="#e6e6e6"/><path d="M3.6,9.6 L6.4,13.2 L13.6,2.8" fill="none" stroke="#ff8a00" stroke-width="1.9" stroke-linecap="round" stroke-linejoin="round"/></svg>
<span class="tr" style="left:99.7px;top:434.3px;font-size:13px;color:#3a3a3a;display:inline-block;transform:scaleX(0.965);transform-origin:0 50%;">Plate 1</span>
<svg class="abs" style="left:71.0px;top:454.5px" width="18" height="18" viewBox="0 0 18 18"><rect x="1" y="4.4" width="10.8" height="10.4" rx="1.6" fill="#e6e6e6"/><path d="M3.6,9.6 L6.4,13.2 L13.6,2.8" fill="none" stroke="#ff8a00" stroke-width="1.9" stroke-linecap="round" stroke-linejoin="round"/></svg>
<span class="tr" style="left:99.7px;top:456.3px;font-size:13px;color:#3a3a3a;display:inline-block;transform:scaleX(0.965);transform-origin:0 50%;">Plate 2</span>
<svg class="abs" style="left:71.0px;top:476.5px" width="18" height="18" viewBox="0 0 18 18"><rect x="1" y="4.4" width="10.8" height="10.4" rx="1.6" fill="#e6e6e6"/><path d="M3.6,9.6 L6.4,13.2 L13.6,2.8" fill="none" stroke="#ff8a00" stroke-width="1.9" stroke-linecap="round" stroke-linejoin="round"/></svg>
<span class="tr" style="left:99.7px;top:478.3px;font-size:13px;color:#3a3a3a;display:inline-block;transform:scaleX(0.965);transform-origin:0 50%;">Plate 3</span>
<svg class="abs" style="left:71.0px;top:498.5px" width="18" height="18" viewBox="0 0 18 18"><rect x="1" y="4.4" width="10.8" height="10.4" rx="1.6" fill="#e6e6e6"/><path d="M3.6,9.6 L6.4,13.2 L13.6,2.8" fill="none" stroke="#ff8a00" stroke-width="1.9" stroke-linecap="round" stroke-linejoin="round"/></svg>
<span class="tr" style="left:99.7px;top:500.3px;font-size:13px;color:#3a3a3a;display:inline-block;transform:scaleX(0.965);transform-origin:0 50%;">Plate 4</span>
<svg class="abs" style="left:71.0px;top:520.5px" width="18" height="18" viewBox="0 0 18 18"><rect x="1" y="4.4" width="10.8" height="10.4" rx="1.6" fill="#e6e6e6"/><path d="M3.6,9.6 L6.4,13.2 L13.6,2.8" fill="none" stroke="#ff8a00" stroke-width="1.9" stroke-linecap="round" stroke-linejoin="round"/></svg>
<span class="tr" style="left:99.7px;top:522.3px;font-size:13px;color:#3a3a3a;display:inline-block;transform:scaleX(0.965);transform-origin:0 50%;">Plate 5</span>
<svg class="abs" style="left:71.0px;top:542.5px" width="18" height="18" viewBox="0 0 18 18"><rect x="1" y="4.4" width="10.8" height="10.4" rx="1.6" fill="#e6e6e6"/><path d="M3.6,9.6 L6.4,13.2 L13.6,2.8" fill="none" stroke="#ff8a00" stroke-width="1.9" stroke-linecap="round" stroke-linejoin="round"/></svg>
<span class="tr" style="left:99.7px;top:544.3px;font-size:13px;color:#3a3a3a;display:inline-block;transform:scaleX(0.965);transform-origin:0 50%;">Plate 6</span>
<svg class="abs" style="left:71.0px;top:564.5px" width="18" height="18" viewBox="0 0 18 18"><rect x="1" y="4.4" width="10.8" height="10.4" rx="1.6" fill="#e6e6e6"/><path d="M3.6,9.6 L6.4,13.2 L13.6,2.8" fill="none" stroke="#ff8a00" stroke-width="1.9" stroke-linecap="round" stroke-linejoin="round"/></svg>
<span class="tr" style="left:99.7px;top:566.3px;font-size:13px;color:#3a3a3a;display:inline-block;transform:scaleX(0.965);transform-origin:0 50%;">Plate 7</span>
<svg class="abs" style="left:71.0px;top:586.5px" width="18" height="18" viewBox="0 0 18 18"><rect x="1" y="4.4" width="10.8" height="10.4" rx="1.6" fill="#e6e6e6"/><path d="M3.6,9.6 L6.4,13.2 L13.6,2.8" fill="none" stroke="#ff8a00" stroke-width="1.9" stroke-linecap="round" stroke-linejoin="round"/></svg>
<span class="tr" style="left:99.7px;top:588.3px;font-size:13px;color:#3a3a3a;display:inline-block;transform:scaleX(0.965);transform-origin:0 50%;">Plate 8</span>
<svg class="abs" style="left:71.0px;top:608.5px" width="18" height="18" viewBox="0 0 18 18"><rect x="1" y="4.4" width="10.8" height="10.4" rx="1.6" fill="#e6e6e6"/><path d="M3.6,9.6 L6.4,13.2 L13.6,2.8" fill="none" stroke="#ff8a00" stroke-width="1.9" stroke-linecap="round" stroke-linejoin="round"/></svg>
<span class="tr" style="left:99.7px;top:610.3px;font-size:13px;color:#3a3a3a;display:inline-block;transform:scaleX(0.965);transform-origin:0 50%;">Plate 9</span>
<svg class="abs" style="left:71.0px;top:630.5px" width="18" height="18" viewBox="0 0 18 18"><rect x="1" y="4.4" width="10.8" height="10.4" rx="1.6" fill="#e6e6e6"/><path d="M3.6,9.6 L6.4,13.2 L13.6,2.8" fill="none" stroke="#ff8a00" stroke-width="1.9" stroke-linecap="round" stroke-linejoin="round"/></svg>
<span class="tr" style="left:99.7px;top:632.3px;font-size:13px;color:#3a3a3a;display:inline-block;transform:scaleX(0.965);transform-origin:0 50%;">Bolts 1</span>
<svg class="abs" style="left:71.0px;top:652.5px" width="18" height="18" viewBox="0 0 18 18"><rect x="1" y="4.4" width="10.8" height="10.4" rx="1.6" fill="#e6e6e6"/><path d="M3.6,9.6 L6.4,13.2 L13.6,2.8" fill="none" stroke="#ff8a00" stroke-width="1.9" stroke-linecap="round" stroke-linejoin="round"/></svg>
<span class="tr" style="left:99.7px;top:654.3px;font-size:13px;color:#3a3a3a;display:inline-block;transform:scaleX(0.965);transform-origin:0 50%;">Bolts 2</span>
<svg class="abs" style="left:71.0px;top:674.5px" width="18" height="18" viewBox="0 0 18 18"><rect x="1" y="4.4" width="10.8" height="10.4" rx="1.6" fill="#e6e6e6"/><path d="M3.6,9.6 L6.4,13.2 L13.6,2.8" fill="none" stroke="#ff8a00" stroke-width="1.9" stroke-linecap="round" stroke-linejoin="round"/></svg>
<span class="tr" style="left:99.7px;top:676.3px;font-size:13px;color:#3a3a3a;display:inline-block;transform:scaleX(0.965);transform-origin:0 50%;">Bolts 3</span>
<svg class="abs" style="left:71.0px;top:696.5px" width="18" height="18" viewBox="0 0 18 18"><rect x="1" y="4.4" width="10.8" height="10.4" rx="1.6" fill="#e6e6e6"/><path d="M3.6,9.6 L6.4,13.2 L13.6,2.8" fill="none" stroke="#ff8a00" stroke-width="1.9" stroke-linecap="round" stroke-linejoin="round"/></svg>
<span class="tr" style="left:99.7px;top:698.3px;font-size:13px;color:#3a3a3a;display:inline-block;transform:scaleX(0.965);transform-origin:0 50%;">Bolts 4</span>
<svg class="abs" style="left:71.0px;top:718.5px" width="18" height="18" viewBox="0 0 18 18"><rect x="1" y="4.4" width="10.8" height="10.4" rx="1.6" fill="#e6e6e6"/><path d="M3.6,9.6 L6.4,13.2 L13.6,2.8" fill="none" stroke="#ff8a00" stroke-width="1.9" stroke-linecap="round" stroke-linejoin="round"/></svg>
<span class="tr" style="left:99.7px;top:720.3px;font-size:13px;color:#3a3a3a;display:inline-block;transform:scaleX(0.965);transform-origin:0 50%;">Bolts 5</span>
<svg class="abs" style="left:71.0px;top:740.5px" width="18" height="18" viewBox="0 0 18 18"><rect x="1" y="4.4" width="10.8" height="10.4" rx="1.6" fill="#e6e6e6"/><path d="M3.6,9.6 L6.4,13.2 L13.6,2.8" fill="none" stroke="#ff8a00" stroke-width="1.9" stroke-linecap="round" stroke-linejoin="round"/></svg>
<span class="tr" style="left:99.7px;top:742.3px;font-size:13px;color:#3a3a3a;display:inline-block;transform:scaleX(0.965);transform-origin:0 50%;">Weld 1</span>
<svg class="abs" style="left:71.0px;top:762.5px" width="18" height="18" viewBox="0 0 18 18"><rect x="1" y="4.4" width="10.8" height="10.4" rx="1.6" fill="#e6e6e6"/><path d="M3.6,9.6 L6.4,13.2 L13.6,2.8" fill="none" stroke="#ff8a00" stroke-width="1.9" stroke-linecap="round" stroke-linejoin="round"/></svg>
<span class="tr" style="left:99.7px;top:764.3px;font-size:13px;color:#3a3a3a;display:inline-block;transform:scaleX(0.965);transform-origin:0 50%;">Weld 2</span>
<svg class="abs" style="left:71.0px;top:784.5px" width="18" height="18" viewBox="0 0 18 18"><rect x="1" y="4.4" width="10.8" height="10.4" rx="1.6" fill="#e6e6e6"/><path d="M3.6,9.6 L6.4,13.2 L13.6,2.8" fill="none" stroke="#ff8a00" stroke-width="1.9" stroke-linecap="round" stroke-linejoin="round"/></svg>
<span class="tr" style="left:99.7px;top:786.3px;font-size:13px;color:#3a3a3a;display:inline-block;transform:scaleX(0.965);transform-origin:0 50%;">Weld 3</span>
<div class="abs" style="left:44.2px;top:56.2px;width:198.9px;height:93.4px;border:4px solid #ff0000;border-radius:10px"></div>
<span class="abs" style="left:16.5px;top:113.60000000000002px;font-family:'DejaVu Sans',sans-serif;font-weight:200;font-size:31px;line-height:36px;color:#ff0000;-webkit-text-stroke:.7px #ff0000">1</span>

</div>

<div id="splitter"></div>

<!-- ================= RIGHT PANEL ================= -->
<div id="phead">
<span style="left:10px;font-weight:bold">ULS 1(1)</span>
<span style="left:66px">[ Load ]</span>
<span style="left:427px;font-weight:bold">Copy</span>
<span style="left:465px;font-weight:bold">Delete</span>
</div>
<div id="panel" class="abs" style="left:1408px;top:183px;width:512px;height:944px;background:#fff">
<!-- panel origin (1408,183) -->
<table class="g" style="left:20px;top:20px;width:467px;height:122px">
<colgroup><col style="width:29.5px"><col style="width:137px"><col style="width:50px"><col style="width:50px"><col style="width:50px"><col style="width:50px"><col style="width:50px"><col style="width:50px"></colgroup>
<tr style="height:34px"><th></th><th>Member</th><th>N<br>[kN]</th><th>Vy<br>[kN]</th><th>Vz<br>[kN]</th><th>Mx<br>[kNm]</th><th>My<br>[kNm]</th><th>Mz<br>[kNm]</th></tr>
<tr style="height:29px"><td></td><td><span class="sq">COLUMN C1 Pr1 / Begin</span></td><td>49.88</td><td>-0.03</td><td>-4.23</td><td>0.00</td><td>-10.75</td><td>0.00</td></tr>
<tr style="height:29px"><td></td><td><span class="sq">BEAM B3 Pr3 / End</span></td><td>4.21</td><td>-0.02</td><td>20.08</td><td>0.00</td><td>10.75</td><td>-0.03</td></tr>
<tr style="height:29px"><td></td><td><span class="sq">BEAM B2 Pr2 / End</span></td><td>-0.05</td><td>0.02</td><td>29.80</td><td>0.00</td><td>0.00</td><td>0.03</td></tr>
</table>
<div class="abs" style="left:20px;top:168.6px;font-size:12px;line-height:15px;color:#3a3a3a;white-space:nowrap;transform:scaleX(0.974);transform-origin:0 0">Values in disabled cells are not taken into account in CBFEM</div>
<div class="abs" style="left:20px;top:183.6px;font-size:12px;line-height:15px;color:#3a3a3a;white-space:nowrap;transform:scaleX(0.995);transform-origin:0 0">analysis. Members can be loaded only by that components of</div>
<div class="abs" style="left:20px;top:198.6px;font-size:12px;line-height:15px;color:#3a3a3a;white-space:nowrap;transform:scaleX(1.007);transform-origin:0 0">internal forces which are defined in member "Model type".</div>
<div class="abs" style="left:20px;top:822.8px;font-size:13.5px;line-height:16px;font-weight:bold;color:#333;white-space:nowrap;transform:scaleX(1.02);transform-origin:0 0">Unbalanced forces</div>
<table class="g" style="left:29.6px;top:848.8px;width:332px;height:64.5px">
<colgroup><col style="width:55px"><col style="width:55px"><col style="width:55px"><col style="width:55px"><col style="width:55px"><col style="width:55.5px"></colgroup>
<tr style="height:34px"><th>X<br>[kN]</th><th>Y<br>[kN]</th><th>Z<br>[kN]</th><th>Mx<br>[kNm]</th><th>My<br>[kNm]</th><th>Mz<br>[kNm]</th></tr>
<tr style="height:29.5px"><td>0.00</td><td>0.00</td><td>0.00</td><td>0.00</td><td>0.00</td><td>0.00</td></tr>
</table>

</div>

<!-- ================= STATUS BAR ================= -->
<div id="status" class="brushed">
<svg width="1920" height="33"><rect width="1920" height="33" fill="#060606"/><rect width="1920" height="33" fill="#2c2c2c" filter="url(#br2)"/></svg>
<span class="k" style="left:23px">Design code:</span><span class="v" style="left:99px">EN</span>
<span class="k" style="left:134px">Analysis:</span><span class="v" style="left:185px">Stress, strain</span>
<span class="k" style="left:276px">Load effects:</span><span class="v" style="left:353px">In equilibrium</span>
<span class="k" style="left:450px">Units:</span><span class="v" style="left:490px">mm</span>
<span style="left:1797px;color:#f26f21">www.<span style="position:static;color:#fff">ideastatica</span>.com</span>
</div>

</div>
</body>
</html>
